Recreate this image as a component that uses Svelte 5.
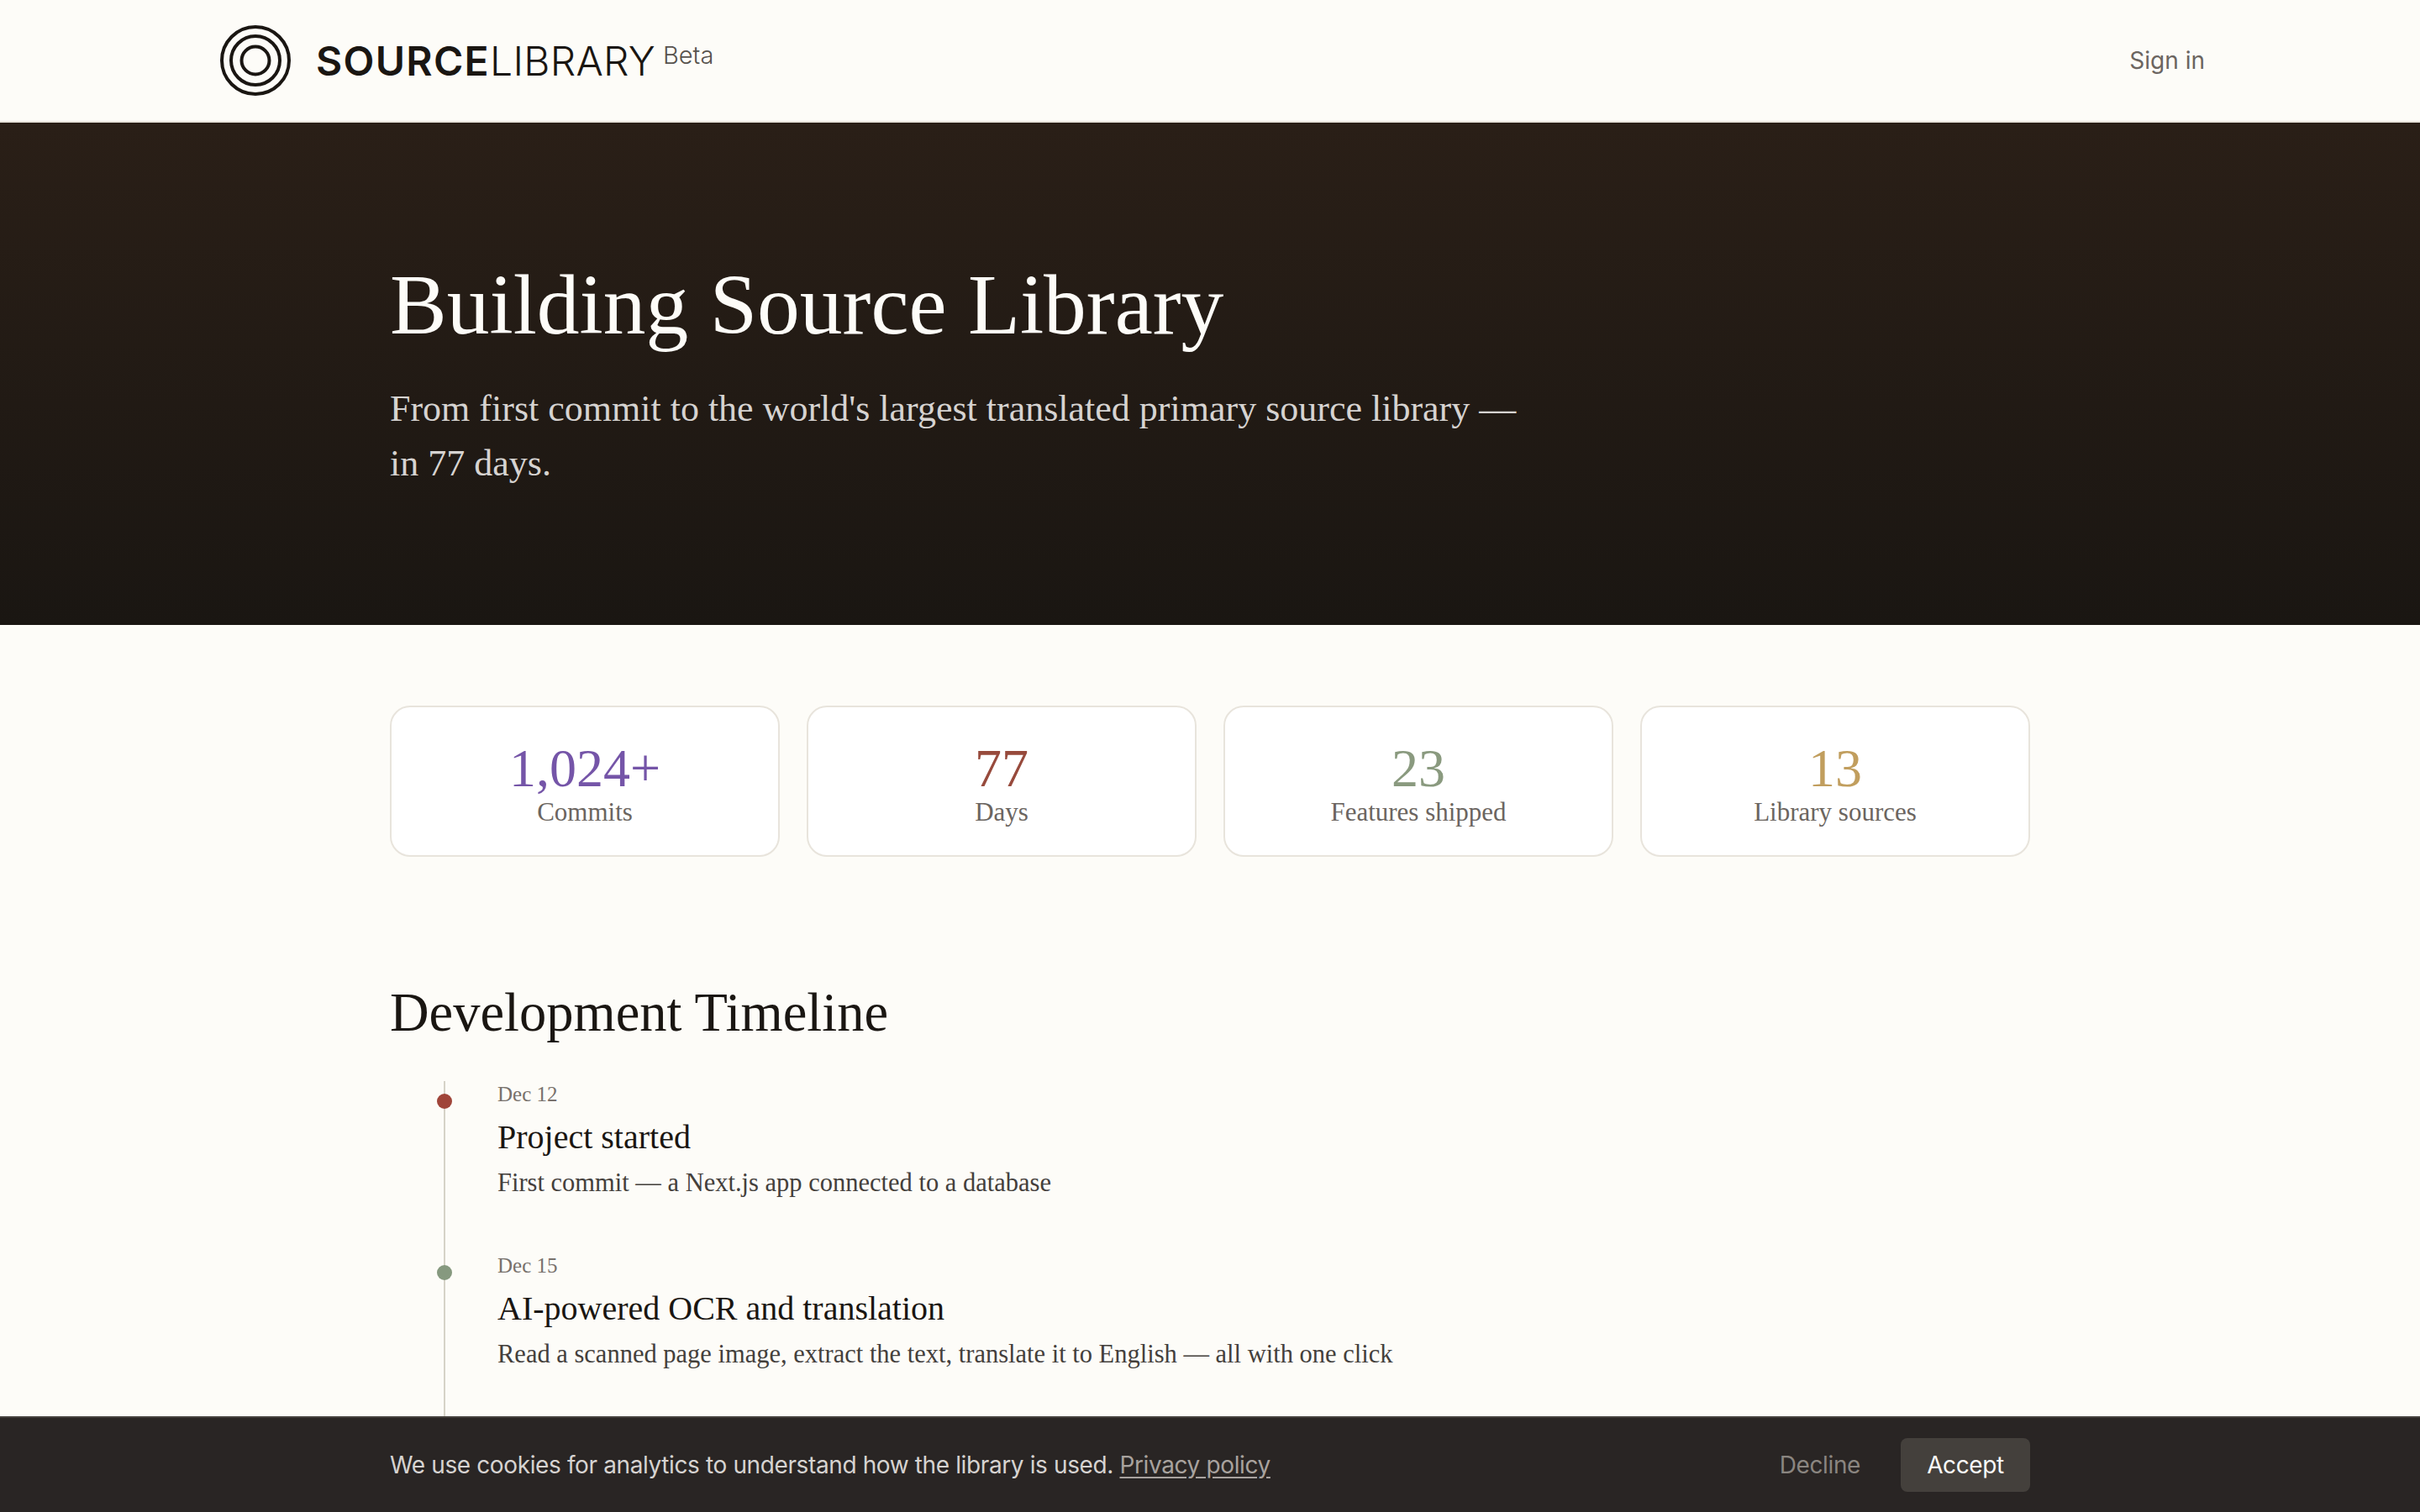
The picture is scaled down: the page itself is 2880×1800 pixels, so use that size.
<script>
  const stats = [
    { value: "1,024+", label: "Commits", color: "#7555a8" },
    { value: "77", label: "Days", color: "#974a3c" },
    { value: "23", label: "Features shipped", color: "#8a9a7f" },
    { value: "13", label: "Library sources", color: "#c19e5e" },
  ];

  const events = [
    {
      date: "Dec 12",
      title: "Project started",
      text: "First commit — a Next.js app connected to a database",
      color: "#a0453a",
    },
    {
      date: "Dec 15",
      title: "AI-powered OCR and translation",
      text: "Read a scanned page image, extract the text, translate it to English — all with one click",
      color: "#86997f",
    },
  ];
</script>

<header class="topbar">
  <div class="topbar-inner">
    <a class="brand" href="#top">
      <svg class="logo" viewBox="0 0 84 84" width="84" height="84" fill="none" stroke="#1a1612" stroke-width="4">
        <circle cx="42" cy="42" r="40" />
        <circle cx="42" cy="42" r="29" />
        <circle cx="42" cy="42" r="16.5" />
      </svg>
      <span class="wordmark"><b>SOURCE</b>LIBRARY</span>
      <span class="beta">Beta</span>
    </a>
    <a class="signin" href="#signin">Sign in</a>
  </div>
</header>

<section class="hero">
  <div class="wrap">
    <h1>Building Source Library</h1>
    <p>From first commit to the world's largest translated primary source library — in 77 days.</p>
  </div>
</section>

<main class="wrap">
  <div class="stats">
    {#each stats as s}
      <div class="stat">
        <div class="stat-value" style:color={s.color}>{s.value}</div>
        <div class="stat-label">{s.label}</div>
      </div>
    {/each}
  </div>

  <h2>Development Timeline</h2>
  <div class="timeline">
    {#each events as e}
      <article class="event">
        <span class="dot" style:background={e.color}></span>
        <div class="event-date">{e.date}</div>
        <h3>{e.title}</h3>
        <p>{e.text}</p>
      </article>
    {/each}
  </div>
</main>

<div class="cookie">
  <div class="cookie-inner">
    <span>We use cookies for analytics to understand how the library is used. <a href="#privacy">Privacy policy</a></span>
    <div class="cookie-actions">
      <button class="decline">Decline</button>
      <button class="accept">Accept</button>
    </div>
  </div>
</div>

<style>
  :global(body) {
    background: #fdfcf8;
    color: #1a1612;
    font-family: "Liberation Serif", serif;
  }
  a {
    color: inherit;
    text-decoration: none;
  }
  .topbar {
    background: #fdfcf8;
    border-bottom: 2px solid #e8e4dc;
  }
  .topbar-inner {
    width: 2368px;
    margin: 0 auto;
    height: 144px;
    display: flex;
    align-items: center;
    justify-content: space-between;
    font-family: Inter, sans-serif;
  }
  .brand {
    display: flex;
    align-items: center;
    margin-left: 6px;
  }
  .logo {
    margin-right: 30px;
  }
  .wordmark {
    font-size: 48px;
    font-weight: 300;
    letter-spacing: 0.3px;
    color: #1a1612;
  }
  .wordmark b {
    font-weight: 600;
    letter-spacing: 1.3px;
  }
  .beta {
    font-size: 29px;
    font-weight: 300;
    color: #57534e;
    margin: -13px 0 0 9px;
  }
  .signin {
    font-size: 28px;
    color: #6b6560;
  }
  .hero {
    background: linear-gradient(180deg, #2a1f17, #1a1612);
    padding: 160px 0;
    color: #fff;
  }
  .wrap {
    width: 1952px;
    margin: 0 auto;
  }
  h1 {
    margin: 0 0 33px;
    font-size: 101.5px;
    line-height: 115px;
    font-weight: 400;
    color: #fdfcf8;
  }
  .hero p {
    margin: 0;
    width: 1344px;
    font-size: 44px;
    line-height: 65px;
    color: #d6d3d1;
  }
  .stats {
    display: grid;
    grid-template-columns: repeat(4, 1fr);
    gap: 32px;
    margin-top: 96px;
  }
  .stat {
    background: #fff;
    border: 2px solid #e8e4dc;
    border-radius: 24px;
    height: 180px;
    box-sizing: border-box;
    display: flex;
    flex-direction: column;
    align-items: center;
    justify-content: center;
    padding-top: 10px;
  }
  .stat-value {
    font-size: 64px;
    line-height: 64px;
  }
  .stat-label {
    font-size: 31px;
    line-height: 40px;
    color: #6b6560;
  }
  h2 {
    margin: 146px 0 0;
    font-size: 64.5px;
    line-height: 80px;
    font-weight: 400;
  }
  .timeline {
    position: relative;
    margin-top: 42px;
    padding: 0 0 104px 128px;
  }
  .timeline::before {
    content: "";
    position: absolute;
    left: 64px;
    top: 0;
    bottom: 0;
    width: 2px;
    background: #d6d3c8;
  }
  .event {
    position: relative;
    height: 205px;
  }
  .dot {
    position: absolute;
    left: -72px;
    top: 15px;
    width: 18px;
    height: 18px;
    border-radius: 50%;
  }
  .event-date {
    font-size: 25px;
    line-height: 32px;
    margin-top: -1px;
    color: #78716c;
  }
  h3 {
    margin: 7px 0 0;
    font-size: 40px;
    line-height: 56px;
    font-weight: 400;
  }
  .event p {
    margin: 3px 0 0;
    font-size: 30.5px;
    line-height: 46px;
    color: #44403c;
  }
  .cookie {
    position: fixed;
    left: 0;
    right: 0;
    bottom: 0;
    height: 114px;
    box-sizing: border-box;
    background: #292524;
    border-top: 2px solid #44403c;
    font-family: Inter, sans-serif;
    font-size: 28px;
    letter-spacing: -0.38px;
    color: #d6d3d1;
  }
  .cookie-inner {
    width: 1952px;
    height: 100%;
    margin: 0 auto;
    display: flex;
    align-items: center;
    justify-content: space-between;
  }
  .cookie-inner a {
    color: #a8a29e;
    text-decoration: underline;
    text-underline-offset: 4px;
  }
  .cookie-actions {
    display: flex;
    align-items: center;
    gap: 48px;
  }
  button {
    font: inherit;
    letter-spacing: inherit;
    border: 0;
    background: none;
    cursor: pointer;
  }
  .decline {
    color: #8a8580;
    padding: 0;
  }
  .accept {
    width: 154px;
    height: 64px;
    border-radius: 8px;
    background: #44403c;
    color: #fafaf9;
  }
</style>
